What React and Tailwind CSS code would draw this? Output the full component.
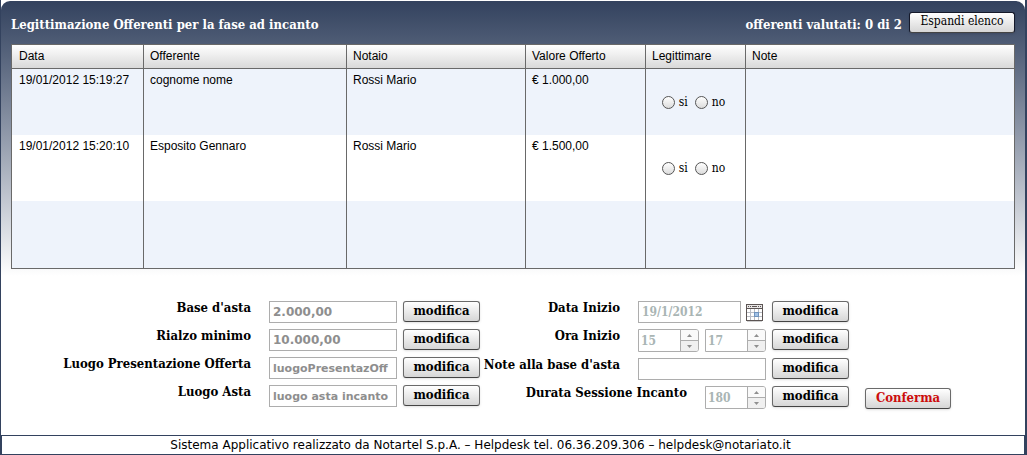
import { useState } from 'react';
import clsx from 'clsx';

const columns = [
    { label: 'Data', width: 'w-[132px]' },
    { label: 'Offerente', width: 'w-[203px]' },
    { label: 'Notaio', width: 'w-[179px]' },
    { label: 'Valore Offerto', width: 'w-[120px]' },
    { label: 'Legittimare', width: 'w-[100px]' },
    { label: 'Note', width: '' },
];

const offers = [
    { id: 1, date: '19/01/2012 15:19:27', bidder: 'cognome nome', notary: 'Rossi Mario', value: '€ 1.000,00' },
    { id: 2, date: '19/01/2012 15:20:10', bidder: 'Esposito Gennaro', notary: 'Rossi Mario', value: '€ 1.500,00' },
];

const serif = "font-['DejaVu_Serif_Condensed','DejaVu_Serif',serif]";

const Button = ({ children, className }) => (
    <button
        type="button"
        className={clsx(
            'h-[21px] shrink-0 rounded-[3px] border border-[#6a6a6a] border-b-[#444] bg-linear-to-b from-white to-[#d6d6d6] pb-[2px] text-center leading-[17px] shadow-sm',
            className
        )}
    >
        {children}
    </button>
);

const EditButton = ({ field }) => (
    <Button className="ml-[6px] w-[77px] text-[13px] font-bold text-black">
        <span aria-label={`modifica ${field}`}>modifica</span>
    </Button>
);

const Label = ({ htmlFor, children }) => (
    <label htmlFor={htmlFor} className="mr-[18px] grow text-right text-[13px] leading-[14px] font-bold whitespace-nowrap text-black">
        {children}
    </label>
);

const TextField = ({ id, value, className }) => (
    <input
        id={id}
        type="text"
        readOnly
        value={value}
        className={clsx(
            'h-[22px] shrink-0 border border-[#adadad] bg-white px-[3px] font-bold outline-none',
            className
        )}
    />
);

const Stepper = ({ id, label, initial, className }) => {
    const [value, setValue] = useState(initial);

    return (
        <div className={clsx('flex h-[23px] w-[61px] shrink-0 rounded-r-[3px] border border-[#adadad] bg-white', className)}>
            <input
                id={id}
                type="text"
                aria-label={label}
                value={value}
                onChange={(e) => setValue(e.target.value)}
                className="w-[41px] px-[2px] text-xs font-bold text-[#a9b5b4] outline-none"
            />
            <div className="flex w-[18px] flex-col border-l border-[#adadad]">
                <button
                    type="button"
                    aria-label="aumenta"
                    onClick={() => setValue(Number(value) + 1)}
                    className="flex flex-1 items-center justify-center rounded-tr-[2px] border-b border-[#adadad] bg-[#fafafa]"
                >
                    <svg width="5" height="3" viewBox="0 0 5 3" fill="#8f8f8f"><path d="M2.5 0 5 3H0z" /></svg>
                </button>
                <button
                    type="button"
                    aria-label="diminuisci"
                    onClick={() => setValue(Number(value) - 1)}
                    className="flex flex-1 items-center justify-center rounded-br-[2px] bg-[#f0f0f0]"
                >
                    <svg width="5" height="3" viewBox="0 0 5 3" fill="#8f8f8f"><path d="M0 0h5L2.5 3z" /></svg>
                </button>
            </div>
        </div>
    );
};

const CalendarIcon = () => (
    <svg width="17" height="18" viewBox="0 0 17 18" shapeRendering="crispEdges">
        <rect x="0" y="0" width="17" height="17" fill="#5c5554" />
        <rect x="1" y="1" width="15" height="3" fill="#e8e6e6" />
        <path d="M2 2h1v1H2zM4 2h1v1H4zM6 2h5v1H6zM12 2h1v1h-1zM14 2h1v1h-1z" fill="#5c5554" />
        <rect x="1" y="5" width="15" height="11" fill="#fff" />
        <path d="M4 5h1v11H4zM8 5h1v11H8zM12 5h1v11h-1zM1 8h15v1H1zM1 12h15v1H1z" fill="#b9bcc4" />
        <rect x="8" y="8" width="5" height="5" fill="#6f93bd" />
        <rect x="9" y="9" width="3" height="3" fill="#a3c2e6" />
        <rect x="1" y="17" width="15" height="1" fill="#d0d0d0" />
    </svg>
);

const Choice = ({ name, value }) => (
    <label className="flex items-center gap-1">
        <input
            type="radio"
            name={name}
            value={value}
            className="size-[13px] appearance-none rounded-full border border-[#555] bg-linear-to-b from-white to-[#dcdcdc] checked:shadow-[inset_0_0_0_3px_#fff] checked:from-[#333] checked:to-[#333]"
        />
        {value}
    </label>
);

const cell = 'border-r border-[#696969] px-[6px] pt-[3px] align-top font-normal first:pl-[7px] last:border-r-0';

const App = () => {
    return (
        <div className={clsx('flex min-h-screen flex-col border-r-2 border-l border-[#33425e] bg-white text-black', serif)}>
            <main className="mt-px flex-1 rounded-t-[9px] bg-linear-to-b from-[#33425e] to-white to-[275px] px-[10px]">
                {/* Title bar */}
                <header className="flex h-[43px] items-center text-[13px] font-bold text-white">
                    <h1 className="grow pt-1">Legittimazione Offerenti per la fase ad incanto</h1>
                    <p className="mr-[7px] pt-1">offerenti valutati: 0 di 2</p>
                    <Button className="w-[106px] border-[#15192a] from-[#f0f0f2] to-[#b6b8be] text-xs font-normal text-black">
                        Espandi elenco
                    </Button>
                </header>

                {/* Offers */}
                <table className="w-full table-fixed border-separate border-spacing-0 border border-[#696969] bg-white text-left font-['Liberation_Sans',Arial,sans-serif] text-xs">
                    <thead>
                        <tr className="h-6">
                            {columns.map((col) => (
                                <th
                                    key={col.label}
                                    className={clsx('border-r border-b border-[#696969] bg-linear-to-b from-white to-[#d9d9d9] px-[6px] pb-px font-normal first:pl-[7px] last:border-r-0', col.width)}
                                >
                                    {col.label}
                                </th>
                            ))}
                        </tr>
                    </thead>
                    <tbody>
                        {offers.map((offer) => (
                            <tr key={offer.id} className="h-[66px] odd:bg-[#eef3fb]">
                                <td className={cell}>{offer.date}</td>
                                <td className={cell}>{offer.bidder}</td>
                                <td className={cell}>{offer.notary}</td>
                                <td className={cell}>{offer.value}</td>
                                <td className="border-r border-[#696969] pr-1">
                                    <div className={clsx('flex items-center justify-center gap-[7px] text-xs', serif)}>
                                        <Choice name={`offer-${offer.id}`} value="si" />
                                        <Choice name={`offer-${offer.id}`} value="no" />
                                    </div>
                                </td>
                                <td className={cell}></td>
                            </tr>
                        ))}
                        <tr className="h-[67px] bg-[#eef3fb]">
                            {columns.map((col) => (
                                <td key={col.label} className={cell}></td>
                            ))}
                        </tr>
                    </tbody>
                </table>

                {/* Auction settings */}
                <form className="flex pt-8 pb-6">
                    <div className="flex w-[469px] shrink-0 flex-col gap-[6px]">
                        <div className="flex">
                            <Label htmlFor="base">Base d'asta</Label>
                            <TextField id="base" value="2.000,00" className="w-32 font-['DejaVu_Sans',sans-serif] text-xs text-[#8e8e8e]" />
                            <EditButton field="base d'asta" />
                        </div>
                        <div className="flex">
                            <Label htmlFor="rialzo">Rialzo minimo</Label>
                            <TextField id="rialzo" value="10.000,00" className="w-32 font-['DejaVu_Sans',sans-serif] text-xs text-[#8e8e8e]" />
                            <EditButton field="rialzo minimo" />
                        </div>
                        <div className="flex">
                            <Label htmlFor="presentazione">Luogo Presentazione Offerta</Label>
                            <TextField id="presentazione" value="luogoPresentazOff" className="w-32 font-['DejaVu_Sans',sans-serif] text-[11px] text-[#8e8e8e]" />
                            <EditButton field="luogo presentazione" />
                        </div>
                        <div className="flex">
                            <Label htmlFor="luogo">Luogo Asta</Label>
                            <TextField id="luogo" value="luogo asta incanto" className="w-32 font-['DejaVu_Sans',sans-serif] text-[11px] text-[#8e8e8e]" />
                            <EditButton field="luogo asta" />
                        </div>
                    </div>

                    <div className="flex w-[369px] shrink-0 flex-col gap-[6px]">
                        <div className="flex">
                            <Label htmlFor="data">Data Inizio</Label>
                            <div className="flex w-32 shrink-0 gap-[5px]">
                                <TextField id="data" value="19/1/2012" className="w-[103px] text-xs text-[#a9b5b4]" />
                                <button type="button" aria-label="Scegli data" className="pt-[2px]">
                                    <CalendarIcon />
                                </button>
                            </div>
                            <EditButton field="data inizio" />
                        </div>
                        <div className="flex">
                            <Label htmlFor="ora">Ora Inizio</Label>
                            <div className="flex w-32 shrink-0 justify-between">
                                <Stepper id="ora" label="Ora Inizio" initial="15" />
                                <Stepper id="minuti" label="Minuti" initial="17" />
                            </div>
                            <EditButton field="ora inizio" />
                        </div>
                        <div className="flex">
                            <Label htmlFor="note">Note alla base d'asta</Label>
                            <TextField id="note" value="" className="w-32 text-xs" />
                            <EditButton field="note" />
                        </div>
                        <div className="flex">
                            <Label htmlFor="durata">Durata Sessione Incanto</Label>
                            <Stepper id="durata" label="Durata Sessione Incanto" initial="180" />
                            <EditButton field="durata" />
                        </div>
                    </div>

                    <Button className="ml-4 w-[86px] self-end text-[13px] font-bold text-[#cc0c0c]">Conferma</Button>
                </form>
            </main>

            <footer className="h-5 border border-[#33425e] pr-[65px] text-center font-['DejaVu_Sans',sans-serif] text-xs leading-[18px]">
                Sistema Applicativo realizzato da Notartel S.p.A. – Helpdesk tel. 06.36.209.306 – helpdesk@notariato.it
            </footer>
        </div>
    );
};

export default App;
